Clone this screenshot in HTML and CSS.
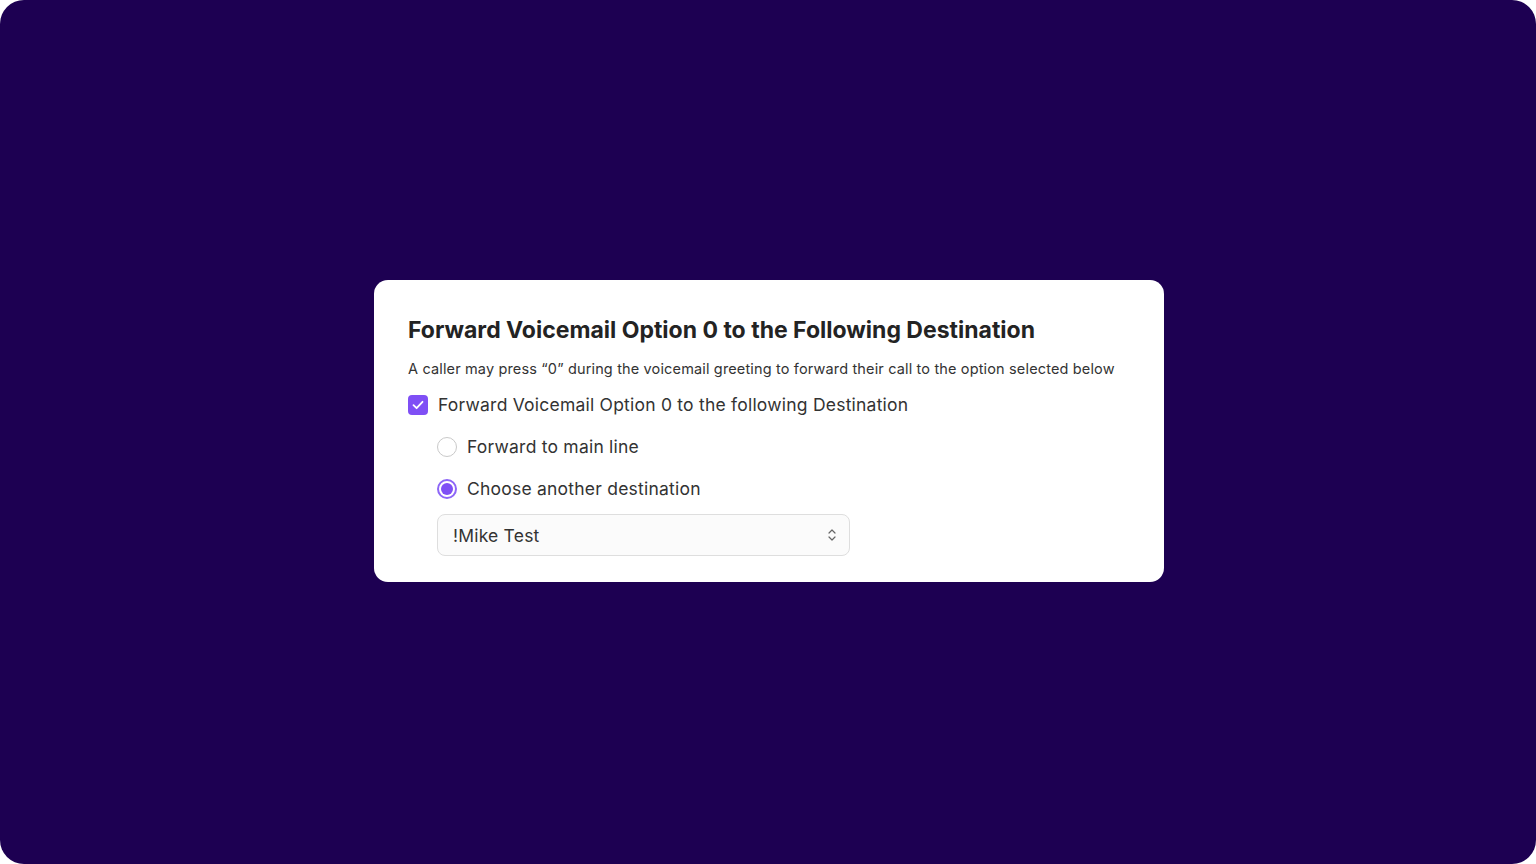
FILE: index.html
```html
<!DOCTYPE html>
<html>
<head>
<meta charset="utf-8">
<link rel="stylesheet" href="styles.css">
</head>
<body>
<div class="frame">
  <div class="card">
    <h1 class="title">Forward Voicemail Option 0 to the Following Destination</h1>
    <p class="desc">A caller may press “0” during the voicemail greeting to forward their call to the option selected below</p>
    <label class="check-row">
      <span class="checkbox">
        <svg viewBox="0 0 20 20" width="20" height="20"><path d="M5.5 10.2 L8.6 13.2 L14.5 6.8" fill="none" stroke="#fff" stroke-width="1.8" stroke-linecap="round" stroke-linejoin="round"/></svg>
      </span>
      <span class="label">Forward Voicemail Option 0 to the following Destination</span>
    </label>
    <div class="options">
      <label class="radio-row">
        <span class="radio"></span>
        <span class="label">Forward to main line</span>
      </label>
      <label class="radio-row">
        <span class="radio checked"><span class="dot"></span></span>
        <span class="label">Choose another destination</span>
      </label>
      <div class="select">
        <span class="select-text">!Mike Test</span>
        <svg class="chev" viewBox="0 0 10 16" width="10" height="16"><path d="M2 6 L5 3 L8 6 M2 10 L5 13 L8 10" fill="none" stroke="#666" stroke-width="1.2" stroke-linecap="round" stroke-linejoin="round"/></svg>
      </div>
    </div>
  </div>
</div>
</body>
</html>
```

FILE: styles.css
```css
html, body {
  margin: 0;
  padding: 0;
  background: #ffffff;
}
body {
  font-family: Inter, "Noto Sans", "Liberation Sans", sans-serif;
  color: #262626;
}
.frame {
  width: 1536px;
  height: 864px;
  box-sizing: border-box;
  padding: 0 0 2px 2px;
  background: #1d0052;
  border-radius: 24px;
  display: flex;
  align-items: center;
  justify-content: center;
}
.card {
  width: 790px;
  height: 302px;
  box-sizing: border-box;
  background: #ffffff;
  border-radius: 14px;
  padding: 35px 34px 24px 34px;
  display: flex;
  flex-direction: column;
}
.title {
  margin: 0;
  font-size: 23px;
  line-height: 30px;
  font-weight: 700;
  color: #232323;
  letter-spacing: 0;
}
.desc {
  margin: 15px 0 0 0;
  font-size: 14.5px;
  line-height: 18px;
  color: #333;
  letter-spacing: 0.15px;
}
.check-row {
  display: flex;
  align-items: center;
  margin-top: 17px;
  height: 20px;
}
.checkbox {
  width: 20px;
  height: 20px;
  border-radius: 4px;
  background: #7f4ff5;
  display: flex;
  align-items: center;
  justify-content: center;
  flex: none;
}
.checkbox svg { display: block; }
.label {
  font-size: 17.5px;
  line-height: 22px;
  color: #333;
  margin-left: 10px;
  letter-spacing: 0.22px;
}
.options {
  padding-left: 29px;
  display: flex;
  flex-direction: column;
}
.radio-row {
  display: flex;
  align-items: center;
  height: 20px;
  margin-top: 22px;
}
.radio {
  width: 20px;
  height: 20px;
  box-sizing: border-box;
  border-radius: 50%;
  border: 1px solid #c9c9c9;
  background: #fff;
  display: flex;
  align-items: center;
  justify-content: center;
  flex: none;
}
.radio.checked {
  border: 2px solid #8d66f7;
}
.dot {
  width: 12px;
  height: 12px;
  border-radius: 50%;
  background: #7f4ff5;
}
.select {
  margin-top: 15px;
  width: 413px;
  height: 42px;
  box-sizing: border-box;
  border: 1px solid #dedede;
  border-radius: 8px;
  background: #fbfbfb;
  display: flex;
  align-items: center;
  justify-content: space-between;
  padding: 0 12px 0 15px;
}
.select-text {
  font-size: 17.5px;
  color: #333;
  letter-spacing: 0.2px;
}
.chev { display: block; }
```
